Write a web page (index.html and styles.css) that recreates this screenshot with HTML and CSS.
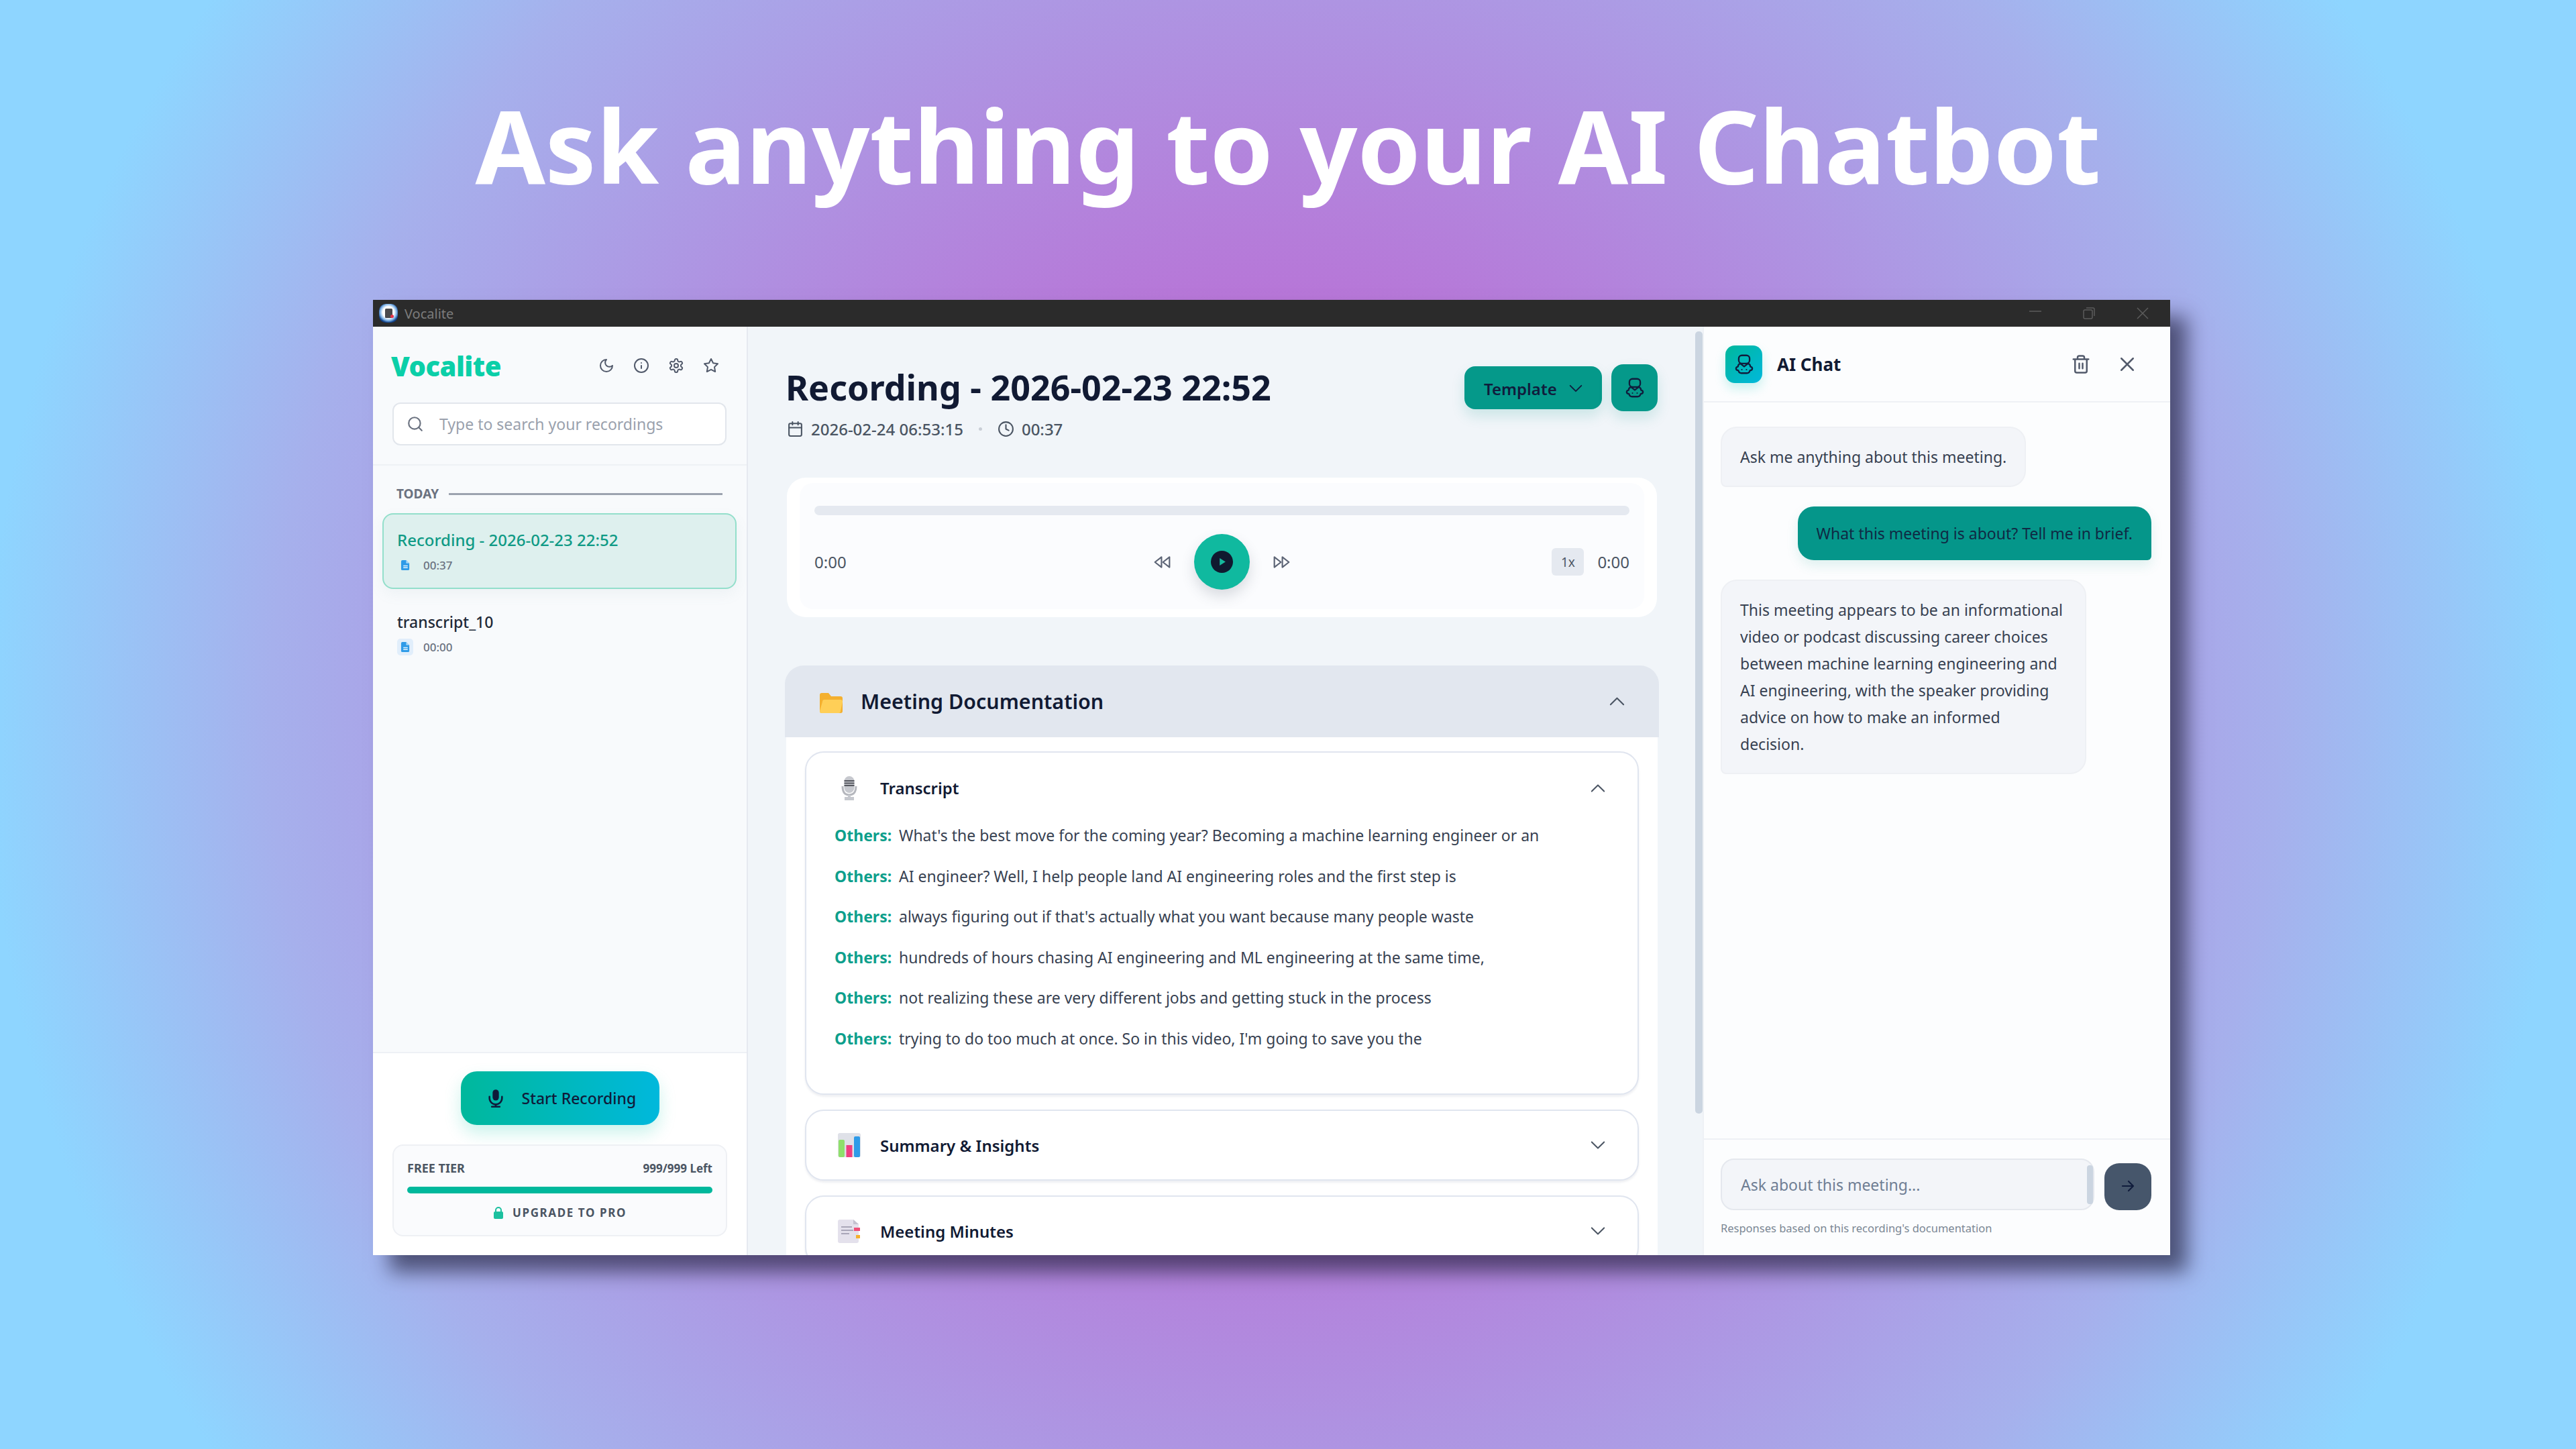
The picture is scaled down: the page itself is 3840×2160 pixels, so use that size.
FILE: index.html
```html
<!DOCTYPE html>
<html lang="en">
<head>
  <meta charset="UTF-8" />
  <title>Ask anything to your AI Chatbot</title>
  <link rel="stylesheet" href="styles.css">
</head>
<body>
  <svg class="defs" width="0" height="0">
    <symbol id="bot" viewBox="0 0 24 26">
      <rect x="5" y="1.500" width="14" height="10.500" rx="4" fill="none" stroke="currentColor" stroke-width="2"/>
      <path d="M7 12C4 13 4 15 4 16 2.500 16.500 1.500 17.500 1.500 18.500 1.500 20 2.500 21 4.500 21 5 23 6.500 24.500 8.500 24.500H15.500C17.500 24.500 19 23 19.500 21 21.500 21 22.500 20 22.500 18.500 22.500 17.500 21.500 16.500 20 16 20 15 20 13 17 12L12 16Z" fill="none" stroke="currentColor" stroke-width="2" stroke-linejoin="round"/>
      <circle cx="9" cy="20" r="0.900" fill="currentColor"/>
      <circle cx="15" cy="20" r="0.900" fill="currentColor"/>
    </symbol>
    <symbol id="file" viewBox="0 0 16 18">
      <path d="M3 1h6l5 5v9a2 2 0 0 1-2 2H3a2 2 0 0 1-2-2V3a2 2 0 0 1 2-2Z" fill="#2f9be8"/>
      <path d="M9 1v5h5" fill="#a9d8f8"/>
      <path d="M4.500 10h7M4.500 13h7" stroke="#dff1fd" stroke-width="1.500"/>
    </symbol>
    <symbol id="chev-up" viewBox="0 0 24 24"><path d="m2 17 10-10 10 10" fill="none" stroke="currentColor" stroke-width="2.200" stroke-linecap="round" stroke-linejoin="round"/></symbol>
    <symbol id="chev-down" viewBox="0 0 24 24"><path d="m2 7 10 10 10-10" fill="none" stroke="currentColor" stroke-width="2.200" stroke-linecap="round" stroke-linejoin="round"/></symbol>
  </svg>

  <h1 class="headline">Ask anything to your AI Chatbot</h1>

  <div class="window">
    <div class="titlebar">
      <svg class="app-icon" viewBox="0 0 28 28">
        <defs>
          <radialGradient id="appglow" cx="50%" cy="45%" r="55%">
            <stop offset="0.55" stop-color="#ffffff"/>
            <stop offset="0.8" stop-color="#7fb4e8"/>
            <stop offset="1" stop-color="#103f86"/>
          </radialGradient>
        </defs>
        <rect width="28" height="28" rx="10" fill="url(#appglow)"/>
        <rect x="9" y="7" width="11" height="14" rx="1.500" fill="#4a4a4e"/>
        <circle cx="19.500" cy="18.500" r="2.500" fill="#e8344a"/>
      </svg>
      <span class="app-name">Vocalite</span>
      <div class="win-controls">
        <svg class="win-min" viewBox="0 0 18 18"><path d="M0 6h18" stroke="currentColor" stroke-width="1.500"/></svg>
        <svg class="win-max" viewBox="0 0 18 18"><rect x="1" y="4" width="13" height="13" rx="2" fill="none" stroke="currentColor" stroke-width="1.500"/><path d="M5 1h10a2 2 0 0 1 2 2v10" fill="none" stroke="currentColor" stroke-width="1.500"/></svg>
        <svg class="win-close" viewBox="0 0 18 18"><path d="m1 1 16 16M17 1 1 17" stroke="currentColor" stroke-width="1.500"/></svg>
      </div>
    </div>

    <div class="app">
      <aside class="sidebar">
        <div class="side-top">
          <div class="brand-row">
            <span class="brand">Vocalite</span>
            <div class="brand-icons">
              <svg class="ico" viewBox="0 0 24 24"><path d="M12 3a6 6 0 0 0 9 9 9 9 0 1 1-9-9Z"/></svg>
              <svg class="ico" viewBox="0 0 24 24"><circle cx="12" cy="12" r="10"/><path d="M12 16v-4M12 8h.01"/></svg>
              <svg class="ico" viewBox="0 0 24 24"><path d="M12.220 2h-.44a2 2 0 0 0-2 2v.18a2 2 0 0 1-1 1.730l-.43.25a2 2 0 0 1-2 0l-.15-.08a2 2 0 0 0-2.730.73l-.22.38a2 2 0 0 0 .73 2.730l.15.1a2 2 0 0 1 1 1.720v.51a2 2 0 0 1-1 1.740l-.15.09a2 2 0 0 0-.73 2.730l.22.38a2 2 0 0 0 2.730.73l.15-.08a2 2 0 0 1 2 0l.43.25a2 2 0 0 1 1 1.730V20a2 2 0 0 0 2 2h.44a2 2 0 0 0 2-2v-.18a2 2 0 0 1 1-1.730l.43-.25a2 2 0 0 1 2 0l.15.08a2 2 0 0 0 2.730-.73l.22-.39a2 2 0 0 0-.73-2.730l-.15-.08a2 2 0 0 1-1-1.740v-.5a2 2 0 0 1 1-1.740l.15-.09a2 2 0 0 0 .73-2.730l-.22-.38a2 2 0 0 0-2.730-.73l-.15.08a2 2 0 0 1-2 0l-.43-.25a2 2 0 0 1-1-1.730V4a2 2 0 0 0-2-2z"/><circle cx="12" cy="12" r="3"/></svg>
              <svg class="ico" viewBox="0 0 24 24"><polygon points="12 2 15.090 8.260 22 9.270 17 14.140 18.180 21.020 12 17.770 5.820 21.020 7 14.140 2 9.270 8.910 8.260"/></svg>
            </div>
          </div>
          <div class="search">
            <svg class="ico" viewBox="0 0 24 24"><circle cx="11" cy="11" r="8"/><path d="m21 21-4.300-4.300"/></svg>
            <span>Type to search your recordings</span>
          </div>
        </div>

        <div class="history">
          <div class="group-label"><span>TODAY</span><i></i></div>
          <div class="rec-item active">
            <div class="rec-title">Recording - 2026-02-23 22:52</div>
            <div class="rec-meta"><span class="file-badge"><svg><use href="#file"/></svg></span>00:37</div>
          </div>
          <div class="rec-item">
            <div class="rec-title">transcript_10</div>
            <div class="rec-meta"><span class="file-badge"><svg><use href="#file"/></svg></span>00:00</div>
          </div>
        </div>

        <div class="side-foot">
          <button class="record-btn">
            <svg viewBox="0 0 24 24"><rect x="8" y="1" width="8" height="14" rx="4" fill="currentColor"/><path d="M4 10v2a8 8 0 0 0 16 0v-2M12 20v3M7 23h10" fill="none" stroke="currentColor" stroke-width="2.200" stroke-linecap="round"/></svg>
            Start Recording
          </button>
          <div class="tier">
            <div class="tier-row"><span class="tier-name">FREE TIER</span><span>999/999 Left</span></div>
            <div class="tier-bar"></div>
            <div class="upgrade">
              <svg viewBox="0 0 16 18"><path d="M4 8V5a4 4 0 0 1 8 0v3" fill="none" stroke="#1cc09f" stroke-width="2"/><rect x="1" y="7" width="14" height="11" rx="2" fill="#1cc09f"/></svg>
              UPGRADE TO PRO
            </div>
          </div>
        </div>
      </aside>

      <main class="main">
        <div class="rec-head">
          <div>
            <h2 class="rec-heading">Recording - 2026-02-23 22:52</h2>
            <div class="rec-info">
              <svg class="ico" viewBox="0 0 24 24"><rect x="3" y="4" width="18" height="18" rx="2"/><path d="M16 2v4M8 2v4M3 10h18"/></svg>
              <span>2026-02-24 06:53:15</span>
              <i class="dot"></i>
              <svg class="ico" viewBox="0 0 24 24"><circle cx="12" cy="12" r="10"/><path d="M12 6v6l4 2"/></svg>
              <span>00:37</span>
            </div>
          </div>
          <div class="rec-actions">
            <button class="template-btn">Template <svg><use href="#chev-down"/></svg></button>
            <button class="bot-btn"><svg><use href="#bot"/></svg></button>
          </div>
        </div>

        <section class="player">
          <div class="player-inner">
            <div class="progress"></div>
            <div class="controls">
              <span class="time">0:00</span>
              <div class="transport">
                <svg class="ico" viewBox="0 0 24 24"><polygon points="11 19 2 12 11 5 11 19"/><polygon points="22 19 13 12 22 5 22 19"/></svg>
                <button class="play"><span class="play-core"><svg viewBox="0 0 10 12"><path d="M1 1v10l8-5Z" fill="#16b89c"/></svg></span></button>
                <svg class="ico" viewBox="0 0 24 24"><polygon points="13 19 22 12 13 5 13 19"/><polygon points="2 19 11 12 2 5 2 19"/></svg>
              </div>
              <div class="player-right">
                <span class="speed">1x</span>
                <span class="time">0:00</span>
              </div>
            </div>
          </div>
        </section>

        <section class="docs">
          <header class="docs-head">
            <svg class="folder" viewBox="0 0 34 30">
              <path d="M3 0h10l4 5h14a3 3 0 0 1 3 3v19a3 3 0 0 1-3 3H3a3 3 0 0 1-3-3V3a3 3 0 0 1 3-3Z" fill="#f4b02f"/>
              <path d="M7 10h24a3 3 0 0 1 3 3l-3 14a3 3 0 0 1-3 3H3a3 3 0 0 1-3-3l4-14a3 3 0 0 1 3-3Z" fill="#ffcf57"/>
            </svg>
            <span class="docs-title">Meeting Documentation</span>
            <svg class="chev"><use href="#chev-up"/></svg>
          </header>
          <div class="docs-body">
            <div class="doc-card transcript">
              <div class="doc-head">
                <svg class="doc-ico" viewBox="0 0 34 36">
                  <rect x="9.500" y="0" width="15" height="25" rx="7.500" fill="#c6c8ce"/>
                  <path d="M9.500 7h15M9.500 10.500h15M9.500 14h15" stroke="#55575e" stroke-width="2"/>
                  <path d="M7 15c0 9 4 13 10 13s10-4 10-13" fill="none" stroke="#b5b7bd" stroke-width="3"/>
                  <path d="M15 28h4v3h5v5H10v-5h5Z" fill="#c6c8ce"/>
                </svg>
                <span class="doc-name">Transcript</span>
                <svg class="doc-chev"><use href="#chev-up"/></svg>
              </div>
              <div class="lines">
                <p><b>Others:</b>What's the best move for the coming year? Becoming a machine learning engineer or an</p>
                <p><b>Others:</b>AI engineer? Well, I help people land AI engineering roles and the first step is</p>
                <p><b>Others:</b>always figuring out if that's actually what you want because many people waste</p>
                <p><b>Others:</b>hundreds of hours chasing AI engineering and ML engineering at the same time,</p>
                <p><b>Others:</b>not realizing these are very different jobs and getting stuck in the process</p>
                <p><b>Others:</b>trying to do too much at once. So in this video, I'm going to save you the</p>
              </div>
            </div>
            <div class="doc-card">
              <div class="doc-head">
                <svg class="doc-ico" viewBox="0 0 34 36">
                  <rect width="34" height="36" rx="3" fill="#dfe1e8"/>
                  <rect x="1" y="10" width="9" height="26" rx="2" fill="#8fe06b"/>
                  <rect x="12.500" y="18" width="9" height="18" fill="#ef3f80"/>
                  <rect x="24" y="5" width="9" height="31" rx="2" fill="#2f9be8"/>
                </svg>
                <span class="doc-name">Summary &amp; Insights</span>
                <svg class="doc-chev"><use href="#chev-down"/></svg>
              </div>
            </div>
            <div class="doc-card">
              <div class="doc-head">
                <svg class="doc-ico" viewBox="0 0 34 36">
                  <path d="M3 1h20l8 7v25a3 3 0 0 1-3 3H3a3 3 0 0 1-3-3V4a3 3 0 0 1 3-3Z" fill="#e4e1ec"/>
                  <path d="M23 1v7h8Z" fill="#c4c1cf"/>
                  <path d="M5 12h16M5 17h18M5 22h12" stroke="#a9a6b8" stroke-width="2"/>
                  <rect x="24" y="13" width="9" height="5" fill="#ef4f78"/>
                  <rect x="27" y="24" width="6" height="5" fill="#f4b02f"/>
                </svg>
                <span class="doc-name">Meeting Minutes</span>
                <svg class="doc-chev"><use href="#chev-down"/></svg>
              </div>
            </div>
          </div>
        </section>
      </main>

      <div class="main-scroll"><div class="main-thumb"></div></div>

      <aside class="chat">
        <header class="chat-head">
          <span class="chat-logo"><svg><use href="#bot"/></svg></span>
          <span class="chat-title">AI Chat</span>
          <svg class="ico" viewBox="0 0 24 24"><path d="M3 6h18M19 6v14a2 2 0 0 1-2 2H7a2 2 0 0 1-2-2V6M8 6V4a2 2 0 0 1 2-2h4a2 2 0 0 1 2 2v2M10 11v6M14 11v6"/></svg>
          <svg class="ico" viewBox="0 0 24 24"><path d="M19 5 5 19M5 5l14 14"/></svg>
        </header>
        <div class="messages">
          <div class="bubble bot">Ask me anything about this meeting.</div>
          <div class="bubble user">What this meeting is about? Tell me in brief.</div>
          <div class="bubble bot long">This meeting appears to be an informational video or podcast discussing career choices between machine learning engineering and AI engineering, with the speaker providing advice on how to make an informed decision.</div>
        </div>
        <footer class="chat-foot">
          <div class="chat-input-row">
            <div class="chat-input"><span>Ask about this meeting...</span><i></i></div>
            <button class="send"><svg viewBox="0 0 24 24"><path d="M4 12h16M13 5l7 7-7 7" fill="none" stroke="currentColor" stroke-width="2.200" stroke-linecap="round" stroke-linejoin="round"/></svg></button>
          </div>
          <div class="chat-note">Responses based on this recording's documentation</div>
        </footer>
      </aside>
    </div>
  </div>
</body>
</html>
```

FILE: styles.css
```css
* {
  box-sizing: border-box;
}
html, body {
  margin: 0;
  height: 2160px;
}
body {
  width: 3840px;
  overflow: hidden;
  font-family: "Noto Sans", "Open Sans", sans-serif;
  background: radial-gradient(circle 1920px at 1900px 1080px, #b872d6 0%, #b872d6 30%, #a6b0ec 78%, #8ed5ff 100%);
}
button {
  font-family: inherit;
  border: none;
  padding: 0;
}
p, h1, h2 {
  margin: 0;
}
.defs {
  display: block;
  height: 0;
}
.ico {
  fill: none;
  stroke: currentColor;
  stroke-width: 2;
  stroke-linecap: round;
  stroke-linejoin: round;
  flex: none;
}

.headline {
  height: 447px;
  padding-top: 96px;
  text-align: center;
  color: #fff;
  font-size: 151px;
  font-weight: 700;
  line-height: 240px;
  white-space: nowrap;
}

.window {
  width: 2679px;
  height: 1424px;
  margin-left: 556px;
  display: flex;
  flex-direction: column;
  overflow: hidden;
  box-shadow: 25px 25px 28px rgba(25, 25, 50, 0.62);
}

/* title bar */
.titlebar {
  height: 40px;
  flex: none;
  display: flex;
  align-items: center;
  padding-left: 9px;
  background: #2b2b2b;
  color: #7c7c7c;
  font-size: 20px;
}
.app-icon {
  width: 28px;
  height: 28px;
  margin-right: 10px;
}
.win-controls {
  margin-left: auto;
  display: flex;
  align-items: center;
  gap: 62px;
  padding-right: 32px;
  color: #5c5c5c;
}
.win-controls svg {
  width: 18px;
  height: 18px;
}

.app {
  flex: 1;
  display: flex;
  min-height: 0;
}

/* sidebar */
.sidebar {
  width: 559px;
  flex: none;
  display: flex;
  flex-direction: column;
  background: #f8fafc;
  border-right: 2px solid #e6e9f0;
}
.side-top {
  height: 207px;
  flex: none;
  padding: 36px 30px 0 29px;
  border-bottom: 2px solid #eef1f5;
}
.brand-row {
  height: 44px;
  display: flex;
  align-items: center;
  justify-content: space-between;
}
.brand {
  margin-left: -2px;
  color: #0bcfa8;
  font-size: 40px;
  font-weight: 900;
  letter-spacing: -0.5px;
}
.brand-icons {
  display: flex;
  gap: 28px;
  padding-right: 11px;
  color: #525a6b;
}
.brand-icons svg {
  width: 24px;
  height: 24px;
}
.search {
  height: 64px;
  margin-top: 33px;
  display: flex;
  align-items: center;
  gap: 23px;
  padding-left: 19px;
  background: #fff;
  border: 2px solid #e2e6ec;
  border-radius: 12px;
  color: #9aa1ad;
  font-size: 23px;
}
.search svg {
  width: 26px;
  height: 26px;
  color: #6b7280;
}

.history {
  flex: 1;
  padding: 30px 15px 0 14px;
}
.group-label {
  height: 24px;
  display: flex;
  align-items: center;
  gap: 15px;
  padding: 0 21px 0 21px;
  color: #6b7280;
  font-size: 19px;
  font-weight: 700;
}
.group-label i {
  flex: 1;
  height: 3px;
  background: #9ca3af;
}
.rec-item {
  height: 113px;
  margin-top: 17px;
  padding: 20px 20px 0;
  border: 2px solid transparent;
  border-radius: 16px;
}
.rec-item + .rec-item {
  margin-top: 9px;
}
.rec-item.active {
  background: #def0ee;
  border-color: #93dfcb;
  box-shadow: 0 8px 20px rgba(120, 150, 170, 0.08);
}
.rec-title {
  height: 36px;
  font-size: 23px;
  font-weight: 500;
  line-height: 36px;
  color: #1f2937;
}
.active .rec-title {
  font-size: 24px;
  color: #0f9a85;
}
.rec-meta {
  margin-top: 7px;
  display: flex;
  align-items: center;
  gap: 15px;
  color: #6b7280;
  font-size: 17px;
  font-weight: 500;
}
.file-badge {
  width: 24px;
  height: 25px;
  display: flex;
  align-items: center;
  justify-content: center;
  border-radius: 5px;
  background: #e1eefb;
}
.active .file-badge {
  background: none;
}
.file-badge svg {
  width: 15px;
  height: 17px;
}

.side-foot {
  height: 303px;
  flex: none;
  padding: 27px 29px 0;
  display: flex;
  flex-direction: column;
  align-items: center;
  background: #fff;
  border-top: 2px solid #eef1f5;
}
.record-btn {
  width: 296px;
  height: 80px;
  display: flex;
  align-items: center;
  gap: 25px;
  padding-left: 38px;
  border-radius: 24px;
  background: linear-gradient(90deg, #00b89c, #00b8dc);
  color: #0f1b3a;
  font-size: 23px;
  font-weight: 500;
  box-shadow: 0 12px 24px rgba(20, 200, 170, 0.22);
}
.record-btn svg {
  width: 28px;
  height: 32px;
}
.tier {
  align-self: stretch;
  height: 137px;
  margin-top: 29px;
  padding: 22px 20px 0;
  background: #fafbfd;
  border: 2px solid #eef0f4;
  border-radius: 16px;
  color: #4b5563;
  font-size: 17px;
  font-weight: 700;
}
.tier-name {
  font-size: 18px;
}
.tier-row {
  height: 22px;
  display: flex;
  justify-content: space-between;
  align-items: center;
}
.tier-bar {
  height: 10px;
  margin-top: 17px;
  border-radius: 5px;
  background: #00b89c;
}
.upgrade {
  margin-top: 17px;
  display: flex;
  align-items: center;
  justify-content: center;
  gap: 13px;
  letter-spacing: 1.600px;
}
.upgrade svg {
  width: 16px;
  height: 18px;
}

/* main column */
.main {
  width: 1412px;
  flex: none;
  padding: 60px 57px 0 58px;
  background: #f1f5f9;
}
.rec-head {
  height: 108px;
  display: flex;
  justify-content: space-between;
}
.rec-heading {
  margin-left: -2px;
  color: #111a33;
  font-size: 52px;
  font-weight: 700;
  line-height: 60px;
}
.rec-info {
  height: 32px;
  margin-top: 16px;
  display: flex;
  align-items: center;
  color: #4b5563;
  font-size: 24px;
  font-weight: 500;
}
.rec-info svg {
  width: 25px;
  height: 25px;
  margin-right: 11px;
}
.rec-info .dot {
  width: 5px;
  height: 5px;
  margin: 0 23px;
  border-radius: 50%;
  background: #c9ced6;
}
.rec-actions {
  display: flex;
  align-items: center;
  gap: 14px;
  height: 70px;
  margin: -4px -1px 0 0;
}
.template-btn {
  width: 205px;
  height: 64px;
  display: flex;
  align-items: center;
  gap: 18px;
  padding: 2px 0 0 29px;
  border-radius: 16px;
  background: #05998a;
  color: #101c3c;
  font-size: 24px;
  font-weight: 600;
  box-shadow: 0 10px 20px rgba(5, 150, 135, 0.16);
}
.template-btn svg {
  width: 20px;
  height: 20px;
}
.bot-btn {
  width: 69px;
  height: 70px;
  display: flex;
  align-items: center;
  justify-content: center;
  border-radius: 18px;
  background: #05998a;
  color: #101c3c;
  box-shadow: 0 10px 20px rgba(5, 150, 135, 0.16);
}
.bot-btn svg {
  width: 28px;
  height: 30px;
}

.player {
  height: 208px;
  margin-top: 57px;
  padding: 8px 19px 12px;
  background: #fff;
  border-radius: 28px;
}
.player-inner {
  height: 100%;
  padding: 34px 22px 0;
  background: #fbfcfe;
  border-radius: 20px;
}
.progress {
  height: 14px;
  border-radius: 7px;
  background: #e5e9f0;
}
.controls {
  margin-top: 28px;
  display: grid;
  grid-template-columns: 1fr auto 1fr;
  align-items: center;
}
.time {
  color: #4b5563;
  font-size: 24px;
}
.transport {
  display: flex;
  align-items: center;
  gap: 34px;
  color: #5c6475;
}
.transport .ico {
  width: 27px;
  height: 26px;
}
.play {
  width: 83px;
  height: 83px;
  display: flex;
  align-items: center;
  justify-content: center;
  border-radius: 50%;
  background: #10b99f;
  box-shadow: 0 10px 20px rgba(60, 70, 90, 0.18);
}
.play-core {
  width: 33px;
  height: 33px;
  display: flex;
  align-items: center;
  justify-content: center;
  border-radius: 50%;
  background: #10192f;
}
.play-core svg {
  width: 11px;
  height: 13px;
  margin-left: 2px;
}
.player-right {
  display: flex;
  justify-content: flex-end;
  align-items: center;
  gap: 20px;
}
.speed {
  width: 48px;
  height: 41px;
  display: flex;
  align-items: center;
  justify-content: center;
  border-radius: 6px;
  background: #e5e9f0;
  color: #4b5563;
  font-size: 19px;
}

.docs {
  margin: 72px -3px 0 -3px;
}
.docs-head {
  height: 107px;
  display: flex;
  align-items: center;
  gap: 27px;
  padding: 0 51px 0 52px;
  background: #e2e7ef;
  border-radius: 28px 28px 0 0;
  color: #111a33;
}
.folder {
  width: 34px;
  height: 30px;
  margin-top: 4px;
}
.docs-title {
  flex: 1;
  font-size: 30.400px;
  font-weight: 600;
}
.chev {
  width: 23px;
  height: 23px;
  color: #4b5563;
}
.docs-body {
  height: 780px;
  margin: 0 2px;
  padding: 21px 28px 0;
  background: #fff;
}
.doc-card {
  height: 106px;
  margin-bottom: 22px;
  background: #fff;
  border: 2px solid #e0e5ef;
  border-radius: 28px;
  box-shadow: 0 3px 3px rgba(120, 130, 160, 0.12);
}
.doc-card.transcript {
  height: 512px;
}
.doc-head {
  height: 102px;
  display: flex;
  align-items: center;
  padding: 0 48px 0 47px;
  color: #111a33;
}
.transcript .doc-head {
  height: 105px;
}
.doc-ico {
  width: 34px;
  height: 36px;
}
.doc-name {
  flex: 1;
  margin-left: 29px;
  font-size: 24px;
  font-weight: 600;
}
.doc-chev {
  width: 22px;
  height: 22px;
  color: #4b5563;
}
.lines {
  padding-left: 42px;
}
.lines p {
  height: 36px;
  margin-bottom: 24.500px;
  line-height: 36px;
  color: #374151;
  font-size: 23px;
  white-space: nowrap;
}
.lines b {
  display: inline-block;
  width: 96px;
  color: #0d9f8c;
  font-weight: 700;
}

.main-scroll {
  width: 11px;
  flex: none;
  padding-top: 7px;
  background: #f1f5f9;
}
.main-thumb {
  height: 1166px;
  border-radius: 5px;
  background: #cbd5e1;
}

/* chat panel */
.chat {
  flex: 1;
  display: flex;
  flex-direction: column;
  background: #fcfdfe;
  border-left: 2px solid #eef1f5;
}
.chat-head {
  height: 113px;
  flex: none;
  display: flex;
  align-items: center;
  gap: 39px;
  padding: 0 49px 0 32px;
  border-bottom: 2px solid #eef1f5;
  color: #525a6b;
}
.chat-logo {
  width: 55px;
  height: 56px;
  display: flex;
  align-items: center;
  justify-content: center;
  border-radius: 14px;
  background: linear-gradient(135deg, #00b89c, #00b8dc);
  color: #101c3c;
  box-shadow: 0 8px 16px rgba(20, 200, 180, 0.22);
}
.chat-logo svg {
  width: 28px;
  height: 30px;
}
.chat-title {
  flex: 1;
  margin-left: -17px;
  color: #111a33;
  font-size: 26px;
  font-weight: 700;
}
.chat-head .ico {
  width: 30px;
  height: 30px;
}
.messages {
  flex: 1;
  display: flex;
  flex-direction: column;
  align-items: flex-start;
  gap: 29px;
  padding: 36px 28px 0 25px;
}
.bubble {
  padding: 24px 30px;
  font-size: 23px;
  line-height: 40px;
}
.bubble.bot {
  background: #f3f5f9;
  border: 2px solid #eef0f4;
  border-radius: 24px 24px 24px 8px;
  color: #374151;
  padding: 23px 27px;
}
.bubble.user {
  align-self: flex-end;
  padding: 20px 28px;
  background: #05968a;
  border-radius: 24px 24px 6px 24px;
  color: #0f2a44;
  box-shadow: 0 8px 18px rgba(5, 150, 135, 0.12);
}
.bubble.long {
  width: 545px;
}
.chat-foot {
  height: 174px;
  flex: none;
  padding: 28px 28px 0 25px;
  border-top: 2px solid #eef1f5;
}
.chat-input-row {
  display: flex;
  align-items: flex-end;
  gap: 15px;
}
.chat-input {
  flex: 1;
  height: 77px;
  display: flex;
  align-items: center;
  justify-content: space-between;
  padding: 8px 0 8px 28px;
  background: #f3f5f9;
  border: 2px solid #e5e8ee;
  border-radius: 20px;
  color: #6f7e94;
  font-size: 23px;
}
.chat-input i {
  width: 9px;
  height: 58px;
  border-radius: 4px;
  background: #cbd5e1;
}
.send {
  width: 70px;
  height: 70px;
  display: flex;
  align-items: center;
  justify-content: center;
  padding-bottom: 3px;
  border-radius: 22px;
  background: #46566b;
  color: #101c3c;
}
.send svg {
  width: 24px;
  height: 24px;
}
.chat-note {
  margin-top: 14px;
  color: #7b8794;
  font-size: 16.500px;
  line-height: 26px;
}
```
